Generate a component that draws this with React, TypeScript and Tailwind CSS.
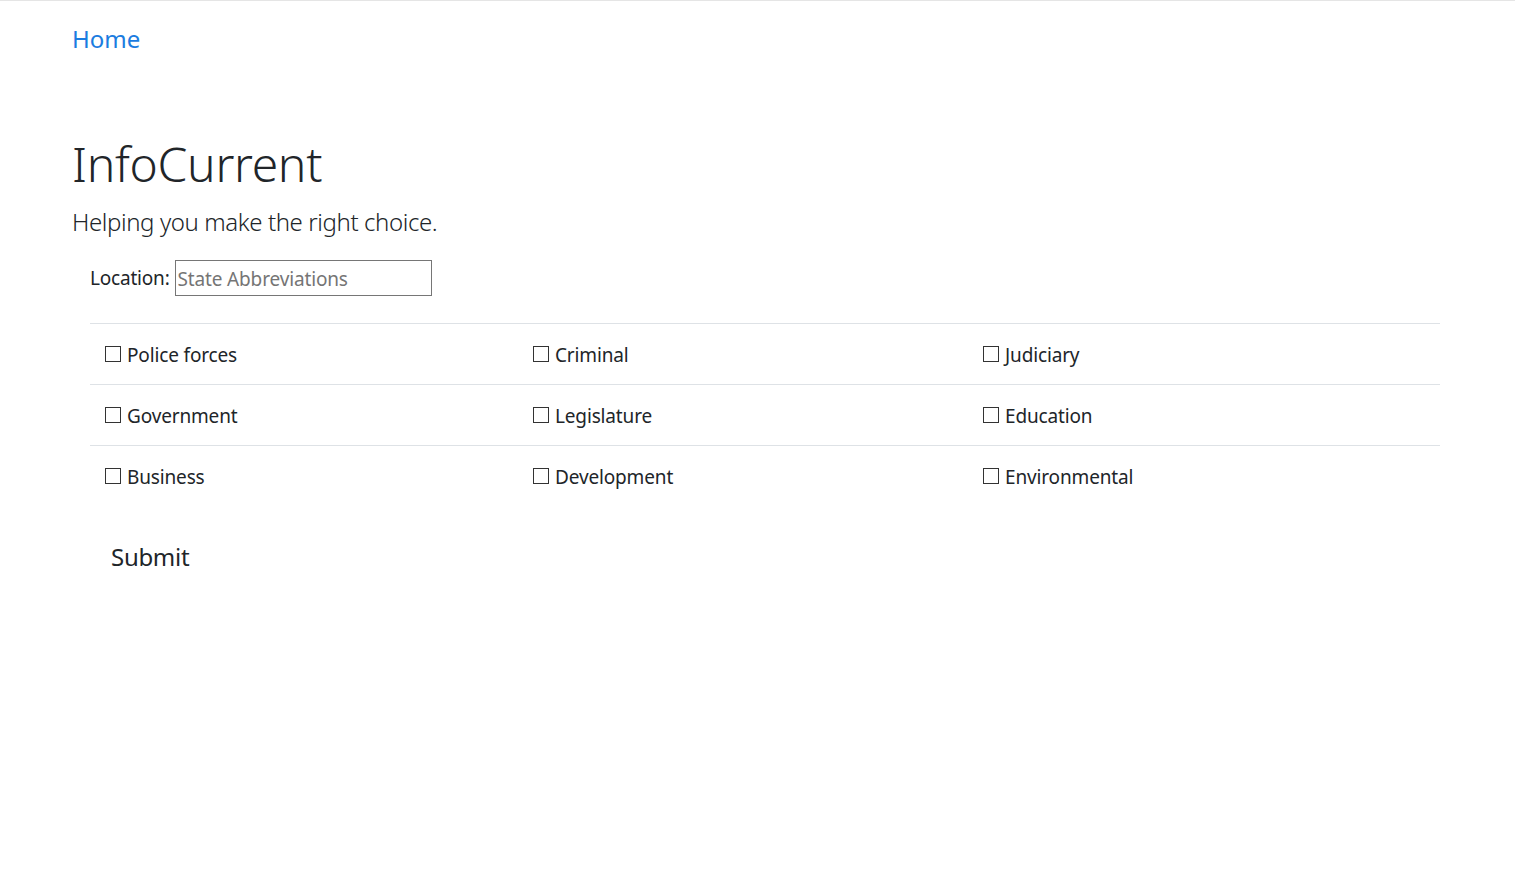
import {useState} from "react";

const topics = [
  ["Police forces", "Criminal", "Judiciary"],
  ["Government", "Legislature", "Education"],
  ["Business", "Development", "Environmental"],
];

const TopicCell = ({label}: {label: string}) => {
  const [checked, setChecked] = useState(false);
  return (
    <label className="flex items-center h-[60px] pl-[15px] cursor-pointer">
      <input
        type="checkbox"
        checked={checked}
        onChange={() => setChecked(!checked)}
        className="appearance-none w-4 h-4 border border-[#333] bg-white m-0 shrink-0 checked:bg-[#333]"
      />
      <span className="ml-[6px] leading-[30px] pt-[1px]">{label}</span>
    </label>
  );
};

export default function App() {
  return (
    <div
      className="min-h-screen bg-white text-[#212529] border-t border-[#e5e5e5]"
      style={{fontFamily: '"Noto Sans", "Open Sans", sans-serif'}}
    >
      <div className="pl-[72px]">
        <a href="#" className="block w-fit mt-[20px] text-[24px] leading-[36px] text-[#1b7ce0]">
          Home
        </a>

        <h1 className="mt-[77px] text-[48px] leading-[60px] font-light tracking-[-0.3px]">
          InfoCurrent
        </h1>
        <p className="mt-[11px] text-[24px] leading-[34px] font-light tracking-[-0.4px]">
          Helping you make the right choice.
        </p>

        <form className="pl-[18px]" onSubmit={(e) => e.preventDefault()}>
          <div className="mt-[21px] flex items-center h-9 text-[19px]">
            <span className="leading-9 tracking-[-0.2px]">Location:</span>
            <input
              type="text"
              placeholder="State Abbreviations"
              className="ml-[5px] w-[257px] h-9 border border-[#767676] px-[2px] pt-[1px] text-[19px] tracking-[-0.15px] placeholder:text-[#757575] outline-none"
            />
          </div>

          <div className="mt-[27px] w-[1350px] text-[19px] tracking-[-0.15px]">
            {topics.map((row, idx) => (
              <div
                key={idx}
                className="grid grid-cols-[428px_450px_472px] border-t border-[#dee2e6]"
              >
                {row.map((t) => (
                  <TopicCell key={t} label={t} />
                ))}
              </div>
            ))}
          </div>

          <button
            type="submit"
            className="mt-[33px] ml-[21px] block text-[24px] leading-9 bg-transparent tracking-[-0.3px]"
          >
            Submit
          </button>
        </form>
      </div>
    </div>
  );
}
